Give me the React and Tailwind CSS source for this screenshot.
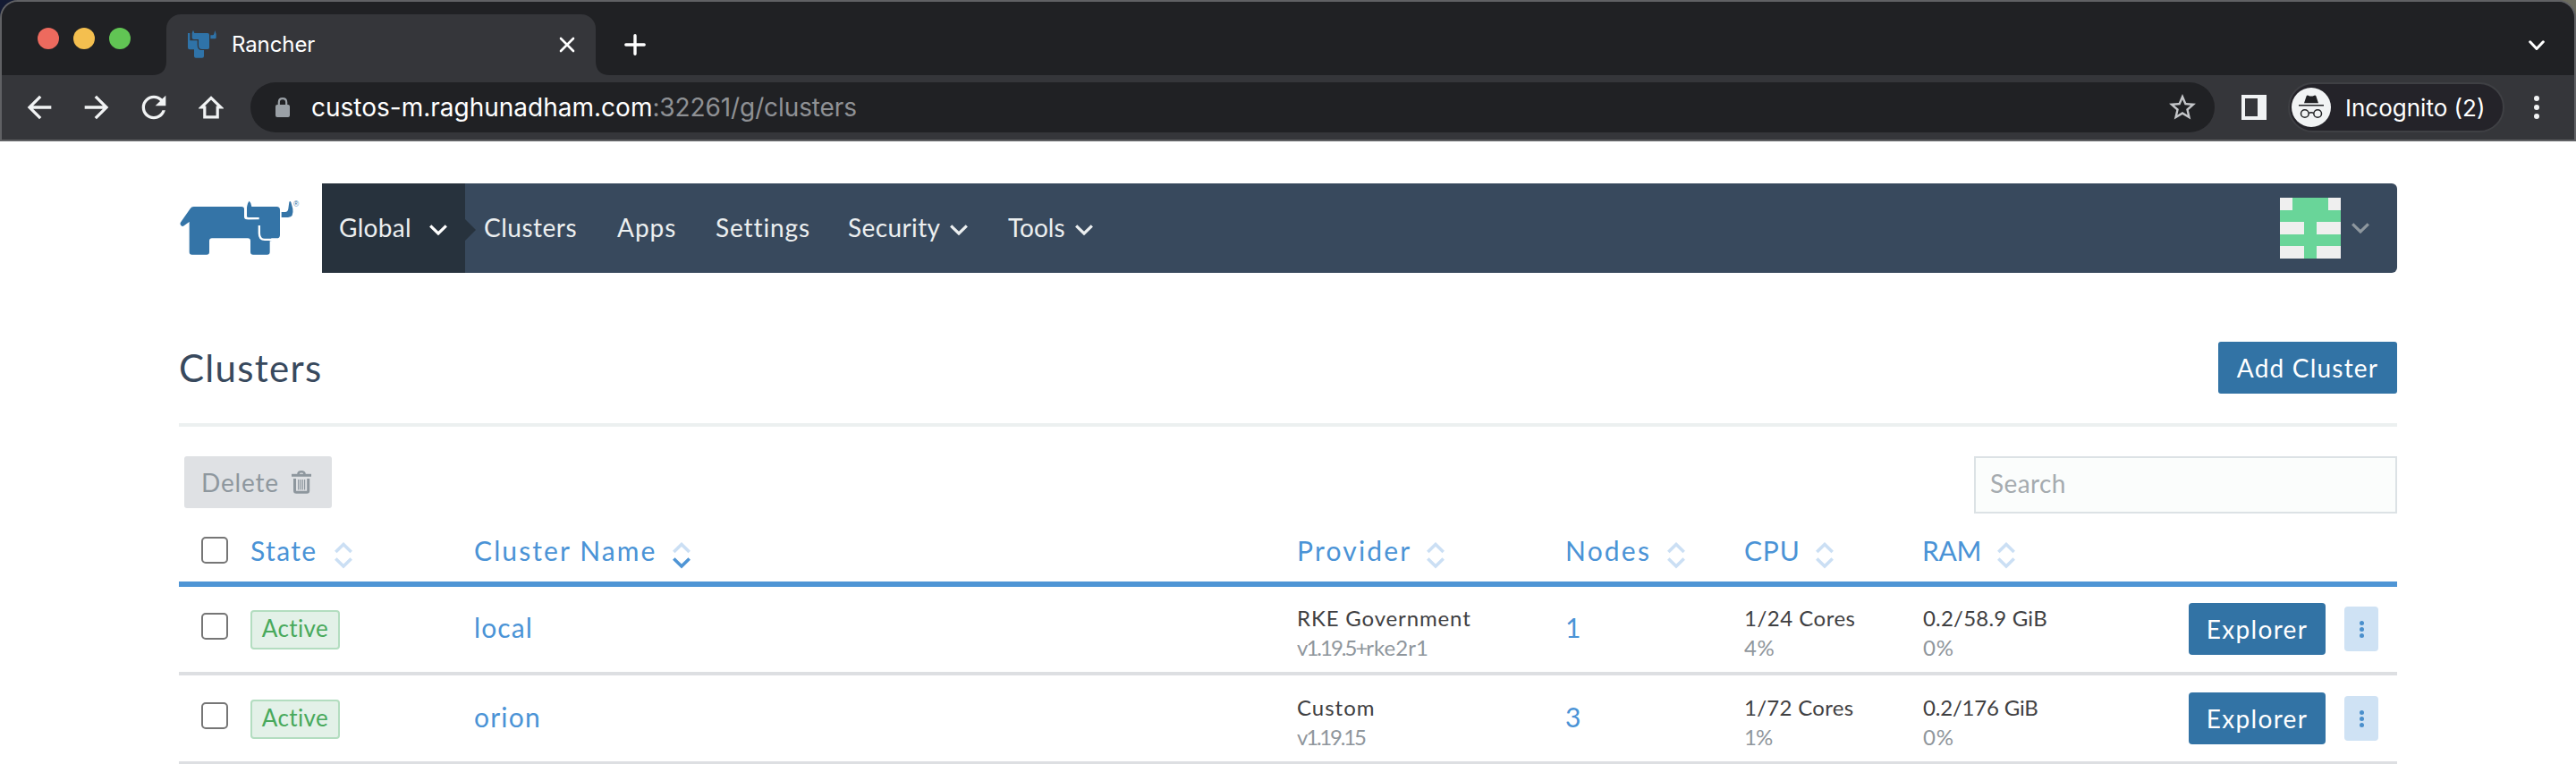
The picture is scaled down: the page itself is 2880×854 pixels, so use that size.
const Chevron = ({ className }) => (
  <svg viewBox="0 0 20 12" className={className} fill="none" stroke="currentColor" strokeWidth="3.2">
    <path d="M1.2 1.4 L10 10 L18.8 1.4" />
  </svg>
);

const RancherFace = () => (
  <svg viewBox="30 24 96 96" className="mb-px h-8 w-8" fill="#2f73a8">
    <path d="M30 33 H37 V58 H62 V72 Q62 90 76 90 H84 V110 Q84 116 78 116 H57 Q51 116 51 110 V88 H36 Q30 88 30 82 Z" />
    <path d="M44 33 L48 23 L52 33 H96 Q102 33 102 39 V82 Q102 87 97 87 H78 Q66 87 66 75 V54 H50 Q44 54 44 49 Z" />
    <path d="M106 40 H113 Q117 40 118 35 L121 24 L125 36 V48 Q125 52 121 52 H106 Z" />
  </svg>
);

const RancherLogo = () => (
  <svg viewBox="30 -15 480 300" className="h-[100px] w-40 shrink-0">
    <g fill="#3474a7">
      <path d="M80 63 H240 Q249 63 249 71 V97 Q249 106 258 106 H340 V178 H335 V215 Q335 224 326 224 H279 Q270 224 270 215 V178 Q270 169 261 169 H141 Q132 169 132 178 V215 Q132 224 123 224 H74 Q65 224 65 215 V114 L47 127 Q42 131 37 126 Q32 120 37 114 L68 70 Q72 63 80 63 Z" />
      <path d="M258 66 Q260 50 266 44 Q273 50 274 63 H358 Q369 63 369 74 V158 Q369 169 358 169 H300 V108 L258 104 Z" />
      <path d="M374 81 H386 Q396 81 397 70 L400 48 Q402 42 406 48 L412 70 Q416 99 396 99 H374 Z" />
    </g>
    <g fill="none" stroke="#fff" strokeWidth="7">
      <path d="M253.500 76 V93 Q253.500 102.500 263 102.500 H299" />
      <path d="M299.500 126 V152 Q299.500 173.500 318 173.500 H342" />
    </g>
    <text x="414" y="64" fontSize="25" fontFamily="Liberation Sans" fill="#3474a7">®</text>
  </svg>
);

const Sort = ({ active }) => (
  <svg viewBox="0 0 20 30" className="mt-[11px] h-[30px] w-5 shrink-0" fill="none" strokeWidth="3.600">
    <path d="M1.300 11 L10 2.500 L18.700 11" stroke="#cbdff4" />
    <path d="M1.300 18.500 L10 27 L18.700 18.500" stroke={active ? "#4f95d5" : "#cbdff4"} />
  </svg>
);

const Checkbox = ({ className }) => (
  <span className={`block h-[30px] w-[30px] rounded-[5px] border-2 border-[#767676] bg-white ${className}`} />
);

const Trash = () => (
  <svg viewBox="0 0 22 26" className="h-[26px] w-[22px]" fill="none" stroke="#8e979e">
    <path d="M0 5.300 H22" strokeWidth="3" />
    <path d="M7.500 4 Q7.500 1.300 11 1.300 Q14.500 1.300 14.500 4" strokeWidth="2.600" />
    <path d="M3.500 9 V22.500 Q3.500 24.300 5.300 24.300 H17 Q18.700 24.300 18.700 22.500 V9" strokeWidth="3" />
    <path d="M7.700 10 V21.500 M10 10 V21.500 M12.300 10 V21.500 M14.600 10 V21.500" strokeWidth="1.200" />
  </svg>
);

const columns = "grid grid-cols-[80px_250px_920px_300px_200px_199px_200px_1fr] items-center";

const headings = [
  { label: "State", spacing: "tracking-[1.400px]", gap: "gap-[19px]" },
  { label: "Cluster Name", spacing: "tracking-[2.100px]", gap: "gap-[18px]", active: true },
  { label: "Provider", spacing: "tracking-[2.200px]", gap: "gap-[17px]" },
  { label: "Nodes", spacing: "tracking-[2.200px]", gap: "gap-[18px]" },
  { label: "CPU", spacing: "tracking-[0.800px]", gap: "gap-[17px]" },
  { label: "RAM", spacing: "tracking-[-0.300px]", gap: "gap-[18px]" },
];

const clusters = [
  {
    name: "local", nameSpacing: "tracking-[1.100px]",
    provider: ["RKE Government", "tracking-[0.850px]"],
    version: [<>v1.19.5+<span className="tracking-normal">rke2r1</span></>, "tracking-[-2px]"],
    nodes: "1", cpu: ["1/24 Cores", "tracking-[0.500px]"], cpuPct: ["4%", "tracking-[0.600px]"],
    ram: ["0.2/58.9 GiB", "tracking-[0.200px]"],
  },
  {
    name: "orion", nameSpacing: "tracking-[1.200px]",
    provider: ["Custom", "tracking-[1px]"], version: ["v1.19.15", "tracking-[-2.200px]"],
    nodes: "3", cpu: ["1/72 Cores", "tracking-[0.300px]"], cpuPct: ["1%", "tracking-[-1px]"],
    ram: ["0.2/176 GiB", "tracking-[-0.200px]"],
  },
];

const TwoLines = ({ top, bottom, className }) => (
  <div className={`whitespace-nowrap pt-2 text-2xl leading-[33px] ${className}`}>
    <div className={`text-[#3f4042] ${top[1]}`}>{top[0]}</div>
    <div className={`text-[#8f969c] ${bottom[1]}`}>{bottom[0]}</div>
  </div>
);

function BrowserChrome() {
  return (
    <header className="h-[158px] bg-linear-to-r from-[#141b33] to-[#6d6d60] font-['Inter',sans-serif]">
      <div className="flex h-[158px] flex-col overflow-hidden rounded-t-[20px] border-2 border-[#606164] bg-[#35363a]">
        <div className="flex h-[82px] items-start bg-[#202124]">
          <div className="flex gap-4 pl-10 pt-[29px]">
            <span className="h-6 w-6 rounded-full bg-[#ed6a5e]" />
            <span className="h-6 w-6 rounded-full bg-[#f4bf4f]" />
            <span className="h-6 w-6 rounded-full bg-[#61c554]" />
          </div>
          <svg viewBox="0 0 16 16" className="ml-6 h-4 w-4 self-end" fill="#35363a"><path d="M0 16 Q16 16 16 0 V16 Z" /></svg>
          <div className="mt-3.5 flex h-[68px] w-[480px] items-center rounded-t-[16px] bg-[#35363a] pl-6 pr-[23px]">
            <RancherFace />
            <span className="ml-[17px] text-2xl tracking-[-0.100px] text-white">Rancher</span>
            <svg viewBox="0 0 18 18" className="ml-auto h-[18px] w-[18px]" stroke="#fff" strokeWidth="2.600" strokeLinecap="round"><path d="M2 2 L16 16 M16 2 L2 16" /></svg>
          </div>
          <svg viewBox="0 0 16 16" className="h-4 w-4 self-end" fill="#35363a"><path d="M16 16 Q0 16 0 0 V16 Z" /></svg>
          <svg viewBox="0 0 24 24" className="ml-4 mt-9 h-6 w-6" stroke="#fff" strokeWidth="3.400" strokeLinecap="round"><path d="M12 1.800 V22.200 M1.800 12 H22.200" /></svg>
          <svg viewBox="0 0 18 12" className="ml-auto mr-[33px] mt-[43px] h-3 w-[18px]" fill="none" stroke="#fff" strokeWidth="3" strokeLinecap="round" strokeLinejoin="round"><path d="M1.700 1.800 L9 9.500 L16.300 1.800" /></svg>
        </div>
        <div className="flex h-[72px] items-center text-[#f1f3f4]">
          <svg viewBox="0 0 24 24" className="ml-[22px] h-10 w-10" fill="currentColor"><path d="M20 11H7.830l5.590-5.590L12 4l-8 8 8 8 1.410-1.410L7.830 13H20v-2z" /></svg>
          <svg viewBox="0 0 24 24" className="ml-6 h-10 w-10" fill="currentColor"><path d="M12 4l-1.410 1.410L16.170 11H4v2h12.170l-5.580 5.590L12 20l8-8z" /></svg>
          <svg viewBox="0 0 24 24" className="ml-6 h-10 w-10" fill="currentColor"><path d="M17.650 6.350C16.200 4.900 14.210 4 12 4c-4.420 0-7.990 3.580-7.990 8s3.570 8 7.990 8c3.730 0 6.840-2.550 7.730-6h-2.080c-.82 2.330-3.040 4-5.650 4-3.310 0-6-2.690-6-6s2.690-6 6-6c1.660 0 3.140.69 4.220 1.780L13 11h7V4l-2.350 2.350z" /></svg>
          <svg viewBox="0 0 28 28" className="ml-[30px] h-7 w-7" fill="none" stroke="currentColor" strokeWidth="3.200"><path d="M6.800 14 V24.800 H21.200 V14 H25 L14 3.400 L3 14 Z" /></svg>
          <div className="ml-[30px] flex h-14 w-[2196px] items-center rounded-full bg-[#202124] pl-7 pr-[18px]">
            <svg viewBox="0 0 16 22" className="h-[22px] w-4"><rect y="8" width="16" height="14" rx="2" fill="#9aa0a6" /><path d="M3.800 9 V5.500 Q3.800 1.200 8 1.200 Q12.200 1.200 12.200 5.500 V9" fill="none" stroke="#9aa0a6" strokeWidth="2.200" /></svg>
            <span className="ml-6 text-[28px] text-white">custos-m.raghunadham.com</span>
            <span className="text-[28px] tracking-[-0.100px] text-[#8f9195]">:32261/g/clusters</span>
            <svg viewBox="0 0 24 24" className="ml-auto h-9 w-9" fill="#c4c6c9"><path d="M22 9.240l-7.190-.62L12 2 9.190 8.630 2 9.240l5.460 4.730L5.820 21 12 17.270 18.180 21l-1.630-7.030L22 9.240zM12 15.400l-3.760 2.270 1-4.280-3.320-2.880 4.380-.38L12 6.100l1.710 4.040 4.380.38-3.320 2.880 1 4.280L12 15.400z" /></svg>
          </div>
          <svg viewBox="0 0 28 28" className="ml-[30px] h-7 w-7" fill="currentColor" fillRule="evenodd"><path d="M0 0 H28 V28 H0 Z M4 4 V24 H18 V4 Z" /></svg>
          <div className="ml-6 flex h-[56px] w-[242px] items-center rounded-full border-2 border-[#3f4044] bg-[#242329] pl-0.5">
            <svg viewBox="606 294 132 132" className="h-11 w-11" fill="#202124">
              <circle cx="672" cy="360" r="66" fill="#f1f3f4" />
              <path d="M648 346 L656 322 Q658 318 662 320 Q672 325 682 320 Q686 318 688 322 L696 346 Z" />
              <g fill="none" stroke="#202124" strokeWidth="4.500"><path d="M630 353.500 H714 M664 379 Q672 375 680 379" /><circle cx="650.500" cy="381" r="13" /><circle cx="693.500" cy="381" r="13" /></g>
            </svg>
            <span className="ml-4 whitespace-nowrap text-[26px] text-white">Incognito (2)</span>
          </div>
          <div className="ml-[33px] flex flex-col gap-1">
            <span className="h-1.5 w-1.5 rounded-full bg-[#f1f3f4]" />
            <span className="h-1.5 w-1.5 rounded-full bg-[#f1f3f4]" />
            <span className="h-1.5 w-1.5 rounded-full bg-[#f1f3f4]" />
          </div>
        </div>
      </div>
    </header>
  );
}

function NavBar() {
  return (
    <nav className="flex h-[100px] text-[28px] text-[#eceff0]">
      <RancherLogo />
      <div className="flex flex-1 items-center rounded-r-[6px] bg-[#38495d] pr-[31px]">
        <div className="flex h-full w-40 items-center bg-[#27323d] pb-[3px] pl-[19px]">
          <span className="w-[101px] tracking-[0.300px]">Global</span>
          <Chevron className="mt-1.5 h-3 w-5 text-white" />
        </div>
        <svg viewBox="0 0 12 24" className="mt-1 h-6 w-3" fill="#27323d"><path d="M0 0 L12 12 L0 24 Z" /></svg>
        <div className="flex items-center pb-[3px]">
          <span className="ml-[9px] w-[149px] tracking-[0.500px]">Clusters</span>
          <span className="w-[110px] tracking-[1px]">Apps</span>
          <span className="w-[148px] tracking-[0.900px]">Settings</span>
          <span className="w-[114px] tracking-[0.400px]">Security</span>
          <Chevron className="mt-1.5 h-3 w-5" />
          <span className="ml-[45px] w-[75px]">Tools</span>
          <Chevron className="mt-1.5 h-3 w-5" />
        </div>
        <svg viewBox="0 0 5 5" className="ml-auto h-[68px] w-[68px]" shapeRendering="crispEdges">
          <rect width="5" height="5" fill="#efefef" />
          <path d="M1 0 H4 V1 H5 V2 H3 V3 H5 V4 H3 V5 H2 V4 H0 V3 H2 V2 H0 V1 H1 Z" fill="#69d599" />
        </svg>
        <Chevron className="ml-3 h-3 w-5 text-[#8e979e]" />
      </div>
    </nav>
  );
}

export default function App() {
  return (
    <div className="h-[854px] w-[2880px] overflow-hidden bg-white font-['Lato',sans-serif]">
      <BrowserChrome />
      <main className="px-[200px] pt-[47px]">
        <NavBar />
        <div className="mt-[77px] flex h-[58px] items-start justify-between">
          <h1 className="mt-[3px] text-[42px] leading-[53px] tracking-[1.300px] text-[#38495d]">Clusters</h1>
          <button className="h-[58px] w-[200px] rounded-[3px] bg-[#3273a5] text-[28px] leading-[58px] tracking-[1.200px] text-white">Add Cluster</button>
        </div>
        <div className="mt-[33px] h-1 bg-[#ecf0f0]" />
        <div className="mt-[33px] flex justify-between pl-1.5">
          <button className="flex h-[58px] w-[165px] items-center rounded-[3px] bg-[#dfe1e4] pl-[19px] text-[28px] text-[#8e979e]">
            <span className="w-[101px] text-left tracking-[0.800px]">Delete</span>
            <Trash />
          </button>
          <div className="flex h-16 w-[473px] items-center border-2 border-[#dce2e5] bg-[#fbfdfc] pb-[5px] pl-4 text-[28px] tracking-[0.400px] text-[#a5abaf]">Search</div>
        </div>

        <div className={`mt-1.5 h-[76px] border-b-[6px] border-[#4f95d5] text-[30px] text-[#4a93d6] ${columns}`}>
          <Checkbox className="ml-[25px]" />
          {headings.map((h) => (
            <div key={h.label} className={`flex items-center whitespace-nowrap ${h.gap}`}>
              <span className={h.spacing}>{h.label}</span>
              <Sort active={h.active} />
            </div>
          ))}
        </div>
        <div className="-mt-px">
          {clusters.map((c) => (
            <div key={c.name} className={`h-[100px] border-b-4 border-[#dddfe2] ${columns}`}>
              <Checkbox className="mb-1.5 ml-[25px]" />
              <div>
                <span className="mt-0.5 flex h-11 w-[100px] items-center justify-center rounded-[4px] border-2 border-[#b3ddc0] bg-[#e3f1e8] pb-1 text-[26px] tracking-[0.400px] text-[#49a95c]">Active</span>
              </div>
              <span className={`pb-[3px] text-[30px] text-[#4a93d6] ${c.nameSpacing}`}>{c.name}</span>
              <TwoLines top={c.provider} bottom={c.version} className="" />
              <span className="pb-[3px] text-[30px] text-[#4a93d6]">{c.nodes}</span>
              <TwoLines top={c.cpu} bottom={c.cpuPct} className="" />
              <TwoLines top={c.ram} bottom={["0%", "tracking-[0.800px]"]} className="pl-px" />
              <div className="flex items-center justify-end gap-[21px] pr-[21px]">
                <button className="h-[58px] w-[153px] shrink-0 rounded-[4px] bg-[#3273a5] text-[28px] leading-[58px] tracking-[1.300px] text-white">Explorer</button>
                <div className="flex h-[50px] w-[38px] shrink-0 flex-col items-center justify-center gap-0.5 rounded-[4px] bg-[#cfe2f4]">
                  <span className="h-[5px] w-[5px] rounded-full bg-[#4a8fcc]" />
                  <span className="h-[5px] w-[5px] rounded-full bg-[#4a8fcc]" />
                  <span className="h-[5px] w-[5px] rounded-full bg-[#4a8fcc]" />
                </div>
              </div>
            </div>
          ))}
        </div>
      </main>
    </div>
  );
}
